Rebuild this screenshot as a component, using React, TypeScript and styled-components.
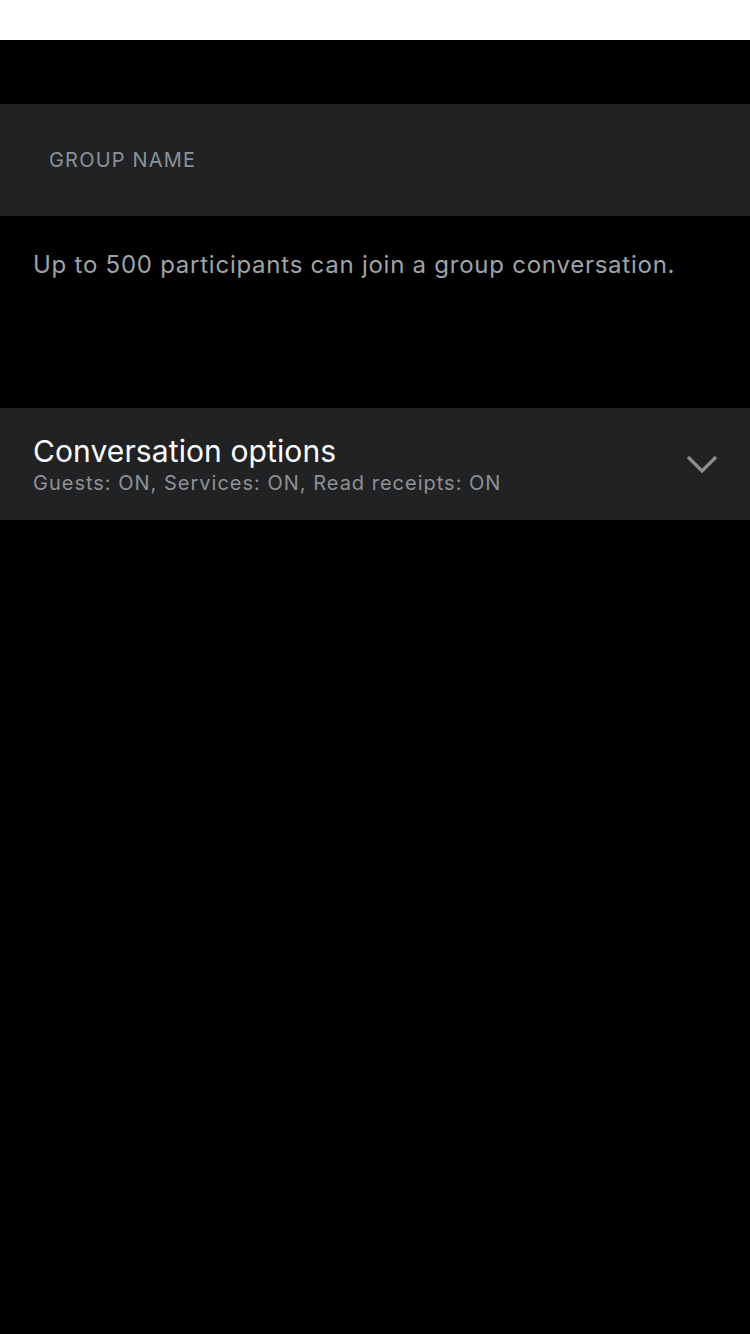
import styled, { createGlobalStyle } from 'styled-components';

const GlobalStyle = createGlobalStyle`
  html, body {
    margin: 0;
    padding: 0;
    background: #000;
  }
  body {
    font-family: Inter, "Noto Sans", sans-serif;
    -webkit-font-smoothing: antialiased;
  }
`;

const Screen = styled.div`
  min-height: 1334px;
  background: #000;
  display: flex;
  flex-direction: column;
`;

const StatusBar = styled.div`
  height: 40px;
  background: #fff;
`;

const Spacer = styled.div<{ h: number }>`
  height: ${({ h }) => h}px;
`;

const Panel = styled.div`
  height: 112px;
  background: #212224;
  display: flex;
  align-items: center;
  box-sizing: border-box;
`;

const NameInput = styled.div`
  padding-left: 49px;
  font-size: 20px;
  letter-spacing: 1.2px;
  color: #8a9299;
  text-transform: uppercase;
`;

const Note = styled.p`
  margin: 0;
  padding: 34px 33px 0;
  height: 158px;
  font-size: 24px;
  color: #9ea4a9;
  letter-spacing: 0.75px;
`;

const OptionsRow = styled(Panel)`
  padding: 0 32px 0 33px;
  justify-content: space-between;
`;

const OptionsText = styled.div`
  display: flex;
  flex-direction: column;
  gap: 2px;
  margin-top: 2px;
`;

const OptionsTitle = styled.div`
  font-size: 30px;
  color: #fff;
  line-height: 34px;
  letter-spacing: 0.1px;
`;

const OptionsSummary = styled.div`
  font-size: 20px;
  color: #8e9195;
  line-height: 26px;
  letter-spacing: 1px;
`;

const Chevron = () => (
  <svg width="32" height="20" viewBox="0 0 32 20" fill="none">
    <path d="M2 3 L16 17 L30 3" stroke="#8c8d8f" strokeWidth="3.2" />
  </svg>
);

export default function App() {
  return (
    <>
      <GlobalStyle />
      <Screen>
        <StatusBar />
        <Spacer h={64} />
        <Panel>
          <NameInput>Group name</NameInput>
        </Panel>
        <Note>Up to 500 participants can join a group conversation.</Note>
        <OptionsRow>
          <OptionsText>
            <OptionsTitle>Conversation options</OptionsTitle>
            <OptionsSummary>Guests: ON, Services: ON, Read receipts: ON</OptionsSummary>
          </OptionsText>
          <Chevron />
        </OptionsRow>
      </Screen>
    </>
  );
}
